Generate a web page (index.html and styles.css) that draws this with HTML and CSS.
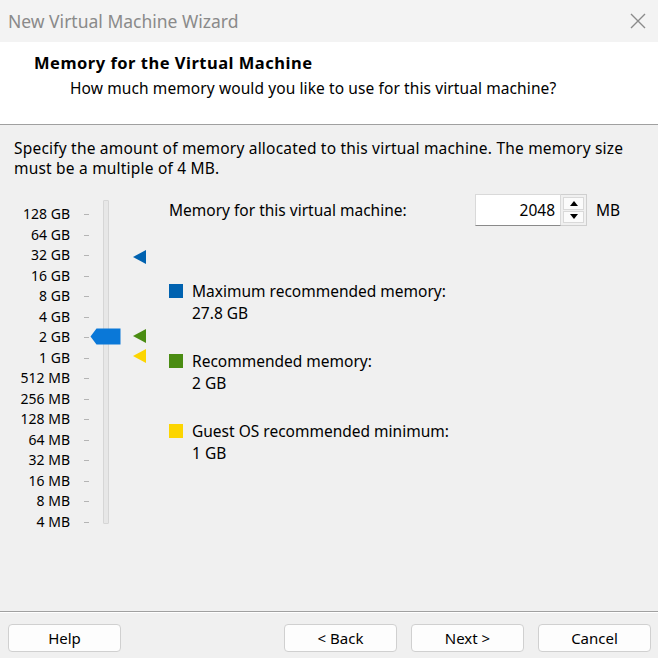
FILE: index.html
```html
<!DOCTYPE html>
<html lang="en">

<head>
    <meta charset="UTF-8">
    <meta name="viewport" content="width=device-width, initial-scale=1.0">
    <title>New Virtual Machine Wizard</title>
    <link rel="stylesheet" href="styles.css">
</head>

<body>
    <div class="titlebar">
        <span class="titlebar_text">New Virtual Machine Wizard</span>
        <svg class="close" width="16" height="16" viewBox="0 0 16 16">
            <path d="M1 1 L15 15 M15 1 L1 15" stroke="#8a8a8a" stroke-width="1.4" fill="none"/>
        </svg>
    </div>

    <header class="page_header">
        <p class="page_title">Memory for the Virtual Machine</p>
        <p class="page_sub">How much memory would you like to use for this virtual machine?</p>
    </header>

    <main class="content">
        <p class="intro">Specify the amount of memory allocated to this virtual machine. The memory size must be a multiple of 4 MB.</p>

        <div class="memory">
            <div class="slider">
                <ul class="scale">
                    <li>128 GB</li>
                    <li>64 GB</li>
                    <li>32 GB</li>
                    <li>16 GB</li>
                    <li>8 GB</li>
                    <li>4 GB</li>
                    <li>2 GB</li>
                    <li>1 GB</li>
                    <li>512 MB</li>
                    <li>256 MB</li>
                    <li>128 MB</li>
                    <li>64 MB</li>
                    <li>32 MB</li>
                    <li>16 MB</li>
                    <li>8 MB</li>
                    <li>4 MB</li>
                </ul>
                <div class="track_area">
                    <div class="track"></div>
                    <svg class="thumb" width="31" height="17" viewBox="0 0 31 17">
                        <path d="M0.5 8.5 L6.5 0.5 L30.5 0.5 L30.5 16.5 L6.5 16.5 Z" fill="#0a78d8"/>
                    </svg>
                </div>
                <div class="marks">
                    <svg class="mark mark_max" width="13" height="14" viewBox="0 0 13 14"><path d="M0 7 L13 0 L13 14 Z" fill="#0062b0"/></svg>
                    <svg class="mark mark_rec" width="13" height="14" viewBox="0 0 13 14"><path d="M0 7 L13 0 L13 14 Z" fill="#4a8c12"/></svg>
                    <svg class="mark mark_min" width="13" height="14" viewBox="0 0 13 14"><path d="M0 7 L13 0 L13 14 Z" fill="#fcd500"/></svg>
                </div>
            </div>

            <div class="details">
                <div class="mem_row">
                    <span class="mem_label">Memory for this virtual machine:</span>
                    <div class="spin">
                        <input class="spin_input" type="text" value="2048">
                        <div class="spin_buttons">
                            <span class="spin_btn"><svg width="8" height="5" viewBox="0 0 8 5"><path d="M0 5 L4 0 L8 5 Z" fill="#000"/></svg></span>
                            <span class="spin_btn"><svg width="8" height="5" viewBox="0 0 8 5"><path d="M0 0 L8 0 L4 5 Z" fill="#000"/></svg></span>
                        </div>
                    </div>
                    <span class="unit">MB</span>
                </div>

                <div class="legend">
                    <div class="legend_item">
                        <span class="swatch swatch_max"></span>
                        <div>
                            <p>Maximum recommended memory:</p>
                            <p>27.8 GB</p>
                        </div>
                    </div>
                    <div class="legend_item">
                        <span class="swatch swatch_rec"></span>
                        <div>
                            <p>Recommended memory:</p>
                            <p>2 GB</p>
                        </div>
                    </div>
                    <div class="legend_item">
                        <span class="swatch swatch_min"></span>
                        <div>
                            <p>Guest OS recommended minimum:</p>
                            <p>1 GB</p>
                        </div>
                    </div>
                </div>
            </div>
        </div>
    </main>

    <footer class="buttons">
        <button class="btn">Help</button>
        <div class="btn_group">
            <button class="btn">&lt; Back</button>
            <button class="btn">Next &gt;</button>
            <button class="btn">Cancel</button>
        </div>
    </footer>
</body>

</html>
```

FILE: styles.css
```css
* {
    margin: 0;
    padding: 0;
    box-sizing: border-box;
}
body{
    width: 658px;
    height: 658px;
    font-family: 'Noto Sans', sans-serif;
    font-size: 15.5px;
    color: #000;
    background-color: #f0f0f0;
    display: flex;
    flex-direction: column;
    overflow: hidden;
}
.titlebar{
    height: 42px;
    background-color: #f3f3f3;
    display: flex;
    align-items: center;
    justify-content: space-between;
    padding: 0 12px 0 8px;
}
.titlebar_text{
    font-size: 17.5px;
    color: #8a8a8a;
}
.page_header{
    height: 83px;
    background-color: #ffffff;
    border-bottom: 1px solid #a0a0a0;
    padding: 11px 0 0 34px;
}
.page_title{
    font-weight: bold;
    font-size: 16.5px;
    letter-spacing: 0.5px;
    line-height: 20px;
}
.page_sub{
    line-height: 20px;
    margin-top: 5px;
    padding-left: 36px;
    letter-spacing: 0.1px;
}
.content{
    flex: 1;
    padding: 13px 14px 0 14px;
    border-bottom: 1px solid #a0a0a0;
    box-shadow: 0 1px 0 #ffffff;
}
.intro{
    line-height: 20px;
    width: 630px;
    letter-spacing: 0.2px;
}
.memory{
    display: flex;
    margin-top: 22px;
}
.slider{
    display: flex;
    width: 155px;
}
.scale{
    list-style: none;
    width: 76px;
    padding-top: 4px;
}
.scale li{
    height: 20.5px;
    line-height: 20.5px;
    text-align: right;
    padding-right: 20px;
    font-size: 14px;
    position: relative;
}
.scale li::after{
    content: "";
    position: absolute;
    right: 1px;
    top: 10px;
    width: 5px;
    height: 1px;
    background-color: #b4b4b4;
}
.track_area{
    position: relative;
    width: 42px;
}
.track{
    margin-left: 13px;
    width: 6px;
    height: 324px;
    background-color: #e7e7e7;
    border: 1px solid #d6d6d6;
    border-radius: 1px;
}
.thumb{
    position: absolute;
    left: 0;
    top: 128px;
}
.marks{
    position: relative;
    width: 23px;
}
.mark{
    position: absolute;
    left: 1px;
}
.mark_max{ top: 50px; }
.mark_rec{ top: 129px; }
.mark_min{ top: 149px; }
.details{
    flex: 1;
}
.mem_row{
    display: flex;
    align-items: center;
    margin-top: -6px;
}
.mem_label{
    width: 306px;
}
.spin{
    display: flex;
    height: 32px;
}
.spin_input{
    width: 86px;
    height: 32px;
    border: 1px solid #d9d9d9;
    border-bottom-color: #8a8a8a;
    background-color: #ffffff;
    text-align: right;
    padding-right: 5px;
    font-family: 'Noto Sans', sans-serif;
    font-size: 15.5px;
}
.spin_buttons{
    width: 26px;
    border: 1px solid #cfcfcf;
    border-left: none;
    display: flex;
    flex-direction: column;
    padding: 2px;
    gap: 1px;
}
.spin_btn{
    flex: 1;
    display: flex;
    align-items: center;
    justify-content: center;
    background-color: #fbfbfb;
    border: 1px solid #d9d9d9;
}
.unit{
    margin-left: 9px;
}
.legend{
    margin-top: 54px;
    display: flex;
    flex-direction: column;
    gap: 26px;
}
.legend_item{
    display: flex;
    gap: 9px;
    line-height: 22px;
}
.swatch{
    width: 14px;
    height: 14px;
    margin-top: 4px;
}
.swatch_max{ background-color: #0062b0; }
.swatch_rec{ background-color: #4a8c12; }
.swatch_min{ background-color: #fcd500; }
.buttons{
    height: 46px;
    display: flex;
    justify-content: space-between;
    align-items: flex-start;
    padding: 12px 7px 0 8px;
}
.btn_group{
    display: flex;
    gap: 14px;
}
.btn{
    width: 113px;
    height: 28px;
    background-color: #fdfdfd;
    border: 1px solid #d0d0d0;
    border-radius: 4px;
    font-family: 'Noto Sans', sans-serif;
    font-size: 15px;
    color: #000;
}
```
